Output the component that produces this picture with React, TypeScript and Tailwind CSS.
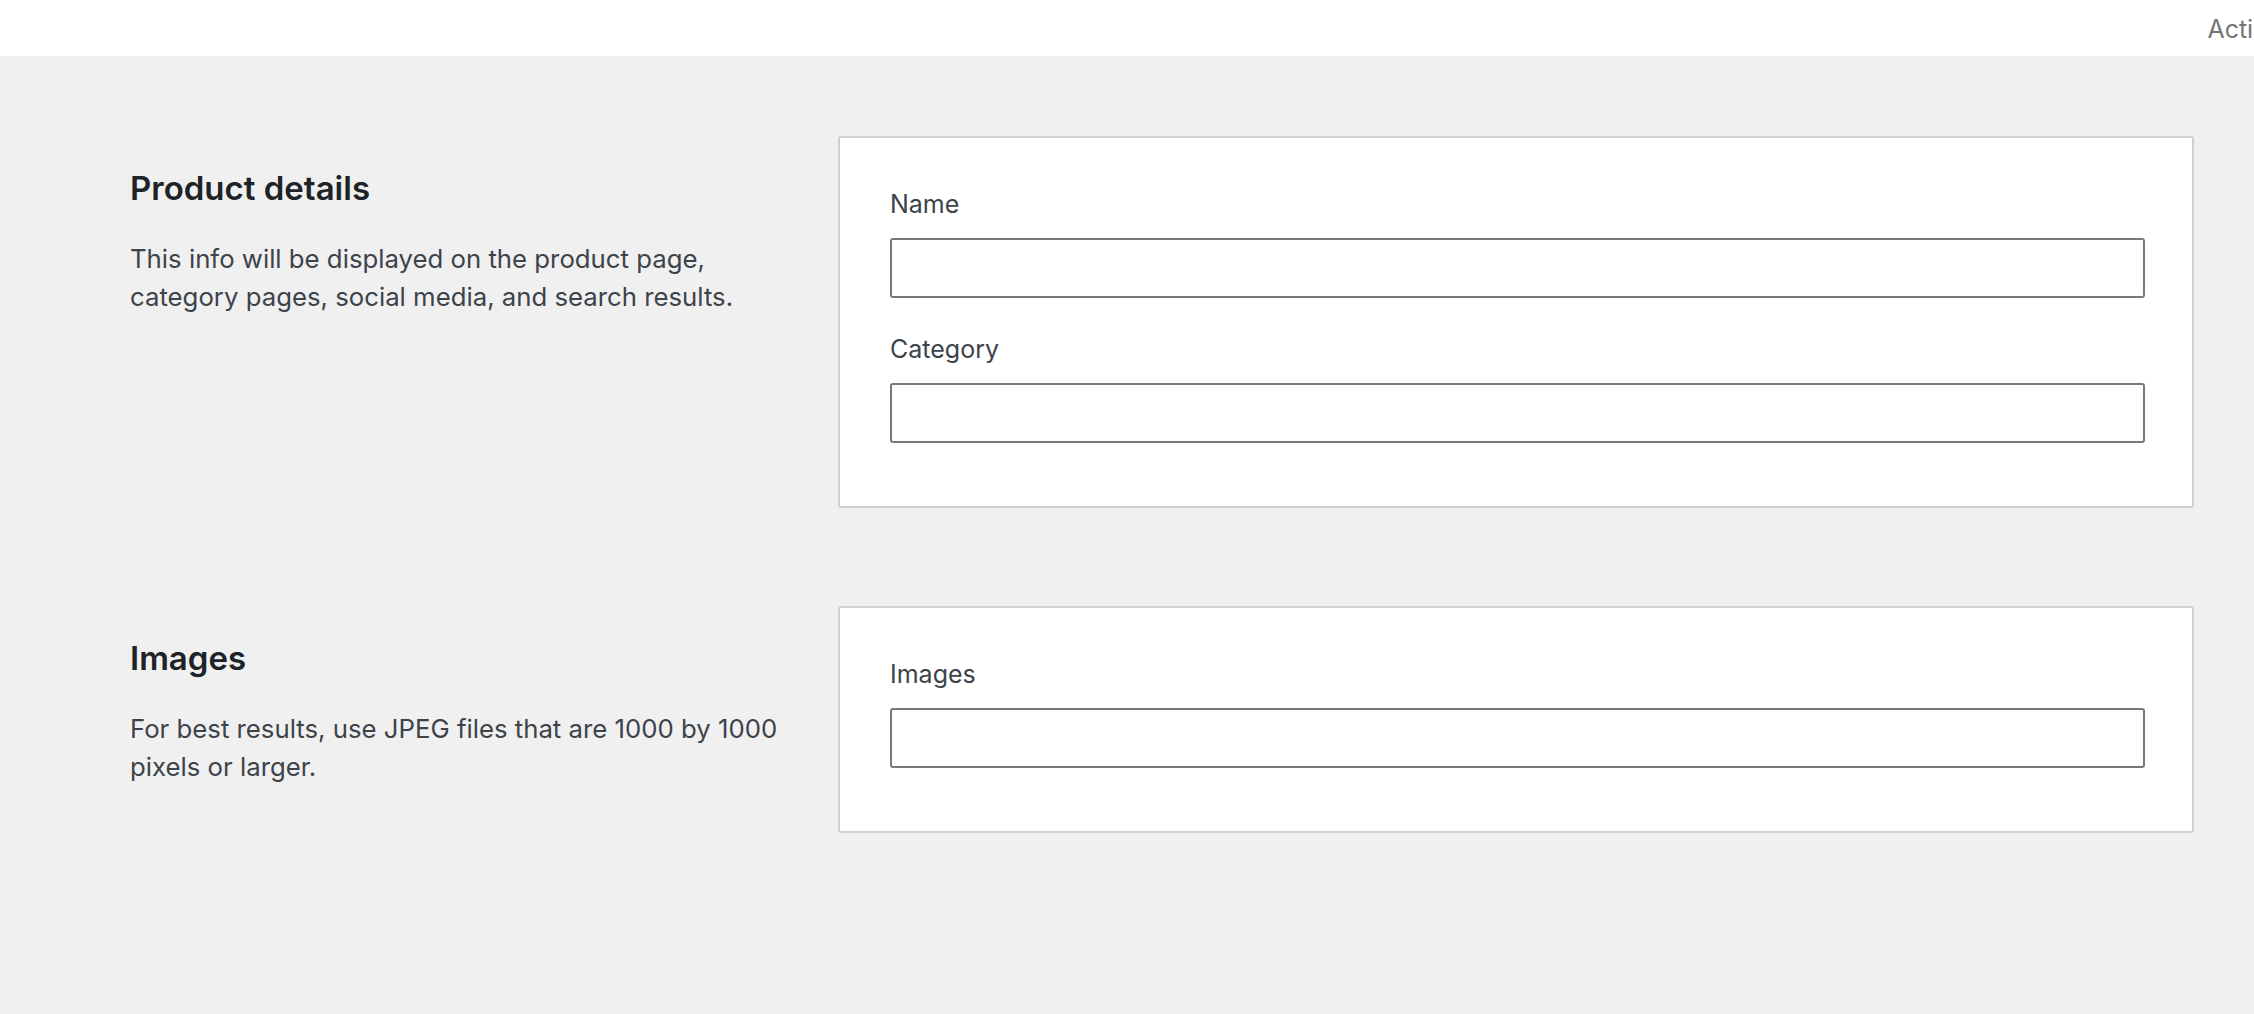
import React from 'react';

interface FieldProps {
  label: string;
  id: string;
}

function Field({ label, id }: FieldProps) {
  return (
    <div className="flex flex-col">
      <label htmlFor={id} className="text-[25px] leading-[36px] text-[#3c434a] mb-[16px]">
        {label}
      </label>
      <input
        id={id}
        type="text"
        className="h-[60px] w-full rounded-[3px] border-2 border-[#787878] bg-white px-4 text-[25px] text-[#1e1e1e] outline-none"
      />
    </div>
  );
}

interface SectionProps {
  title: string;
  description: string;
  children: React.ReactNode;
}

function Section({ title, description, children }: SectionProps) {
  return (
    <section className="flex gap-[38px]">
      <div className="w-[670px] shrink-0 pt-[32px]">
        <h2 className="text-[33px] leading-[40px] font-semibold text-[#1d2327]">{title}</h2>
        <p className="mt-[32px] text-[25.75px] leading-[38px] text-[#3c434a]">{description}</p>
      </div>
      <div className="flex-1 rounded-[3px] border-2 border-[#d0d0d0] bg-white pt-[48px] pb-[63px] pl-[50px] pr-[47px]">
        <div className="flex flex-col gap-[33px]">{children}</div>
      </div>
    </section>
  );
}

export default function App() {
  return (
    <div className="min-h-screen bg-[#f0f0f0]" style={{ fontFamily: 'Inter, "Noto Sans", sans-serif' }}>
      <header className="flex h-[56px] justify-end overflow-hidden bg-white pt-[2px]">
        <button className="-mr-[42px] shrink-0 whitespace-nowrap text-[25px] leading-[36px] text-[#757575]">
          Activity
        </button>
      </header>

      <main className="flex flex-col gap-[98px] pt-[80px] pl-[130px] pr-[60px] pb-[120px]">
        <Section
          title="Product details"
          description="This info will be displayed on the product page, category pages, social media, and search results."
        >
          <Field label="Name" id="name" />
          <Field label="Category" id="category" />
        </Section>

        <Section
          title="Images"
          description="For best results, use JPEG files that are 1000 by 1000 pixels or larger."
        >
          <Field label="Images" id="images" />
        </Section>
      </main>
    </div>
  );
}
